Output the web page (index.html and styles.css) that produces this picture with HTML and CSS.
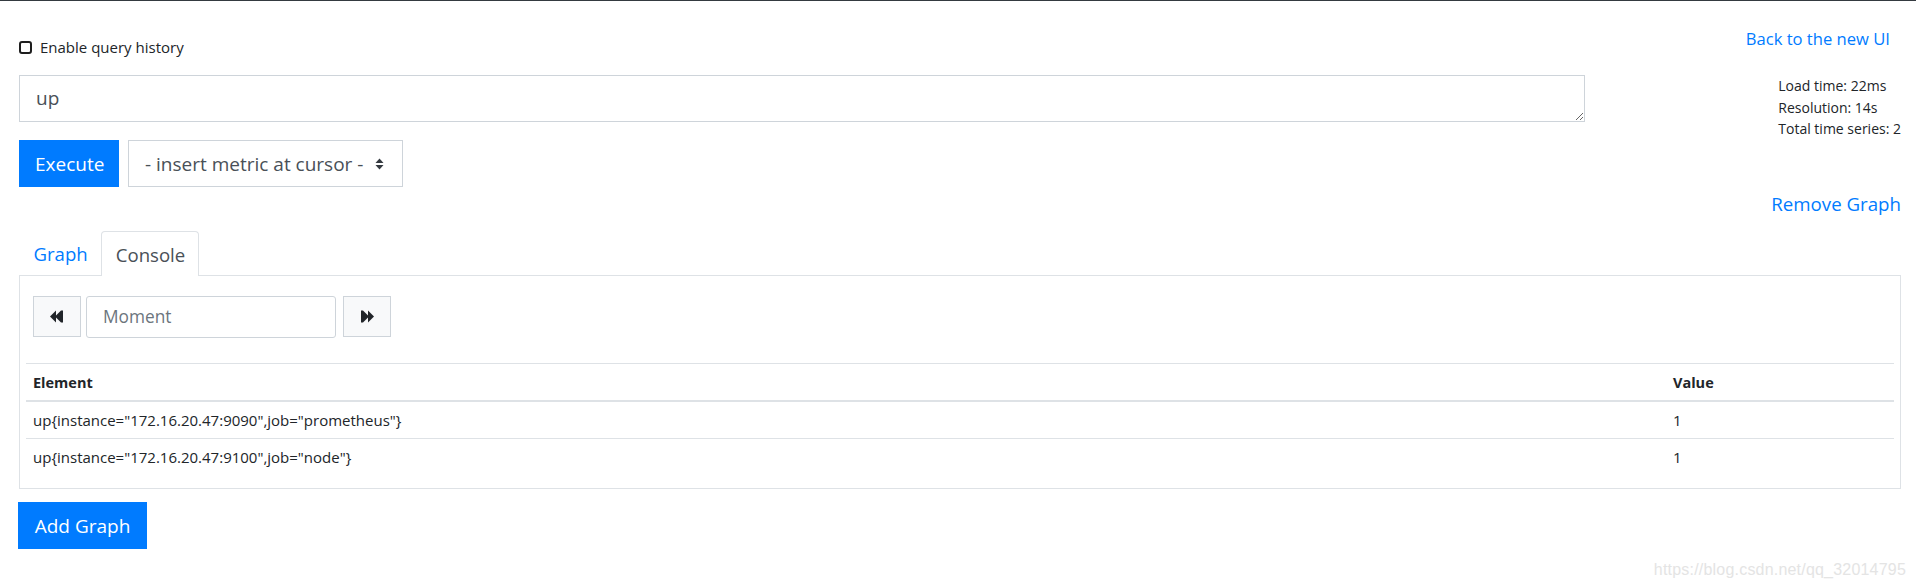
FILE: index.html
```html
<!DOCTYPE html>
<html>
<head>
<meta charset="utf-8">
<link rel="stylesheet" href="styles.css">
</head>
<body>
<div class="topbar"></div>
<div class="page">
  <div class="query-row">
    <div class="query-left">
      <label class="history"><span class="cb"></span><span class="history-text">Enable query history</span></label>
      <textarea class="expr" spellcheck="false">up</textarea>
      <div class="exec-row">
        <button class="btn btn-primary">Execute</button>
        <div class="select">
          <span>- insert metric at cursor -</span>
          <svg class="sel-arrows" width="9" height="12" viewBox="0 0 9 12"><polygon points="0.5,5 4.5,0.5 8.5,5" fill="#343a40"/><polygon points="0.5,7 4.5,11.5 8.5,7" fill="#343a40"/></svg>
        </div>
      </div>
    </div>
    <div class="query-right">
      <a class="link back">Back to the new UI</a>
      <div class="stats">
        <div>Load time: 22ms</div>
        <div>Resolution: 14s</div>
        <div>Total time series: 2</div>
      </div>
    </div>
  </div>
  <div class="remove-row"><a class="link remove">Remove Graph</a></div>
  <div class="tabs">
    <a class="tab link">Graph</a>
    <a class="tab active">Console</a>
  </div>
  <div class="tab-content">
    <div class="moment-row">
      <button class="mbtn"><svg width="14" height="15" viewBox="0 0 14 15"><polygon points="0,7.5 6,1.5 6,13.5" fill="#212529"/><polygon points="5,7.5 11,1.5 11,13.5" fill="#212529"/><rect x="11" y="1.5" width="2" height="12" fill="#212529"/></svg></button>
      <div class="moment">Moment</div>
      <button class="mbtn next"><svg width="14" height="15" viewBox="0 0 14 15"><rect x="1" y="1.5" width="2" height="12" fill="#212529"/><polygon points="3,1.5 9,7.5 3,13.5" fill="#212529"/><polygon points="8,1.5 14,7.5 8,13.5" fill="#212529"/></svg></button>
    </div>
    <table class="data">
      <thead>
        <tr><th class="col-el">Element</th><th>Value</th></tr>
      </thead>
      <tbody>
        <tr><td>up{instance="172.16.20.47:9090",job="prometheus"}</td><td>1</td></tr>
        <tr><td>up{instance="172.16.20.47:9100",job="node"}</td><td>1</td></tr>
      </tbody>
    </table>
  </div>
  <button class="btn btn-primary add">Add Graph</button>
</div>
<div class="watermark">https://blog.csdn.net/qq_32014795</div>
</body>
</html>
```
FILE: styles.css
```css
html, body {
  margin: 0;
  padding: 0;
  background: #fff;
}
body {
  font-family: "Open Sans", "Noto Sans", sans-serif;
  color: #212529;
  width: 1916px;
  height: 586px;
  overflow: hidden;
  position: relative;
}
.topbar {
  height: 1px;
  background: #343a40;
}
.page {
  padding: 0 15px 0 19px;
}
.query-row {
  display: flex;
  justify-content: space-between;
}
.query-left {
  width: 1566px;
  display: flex;
  flex-direction: column;
}
.history {
  display: flex;
  align-items: center;
  margin-top: 39px;
  height: 15px;
  font-size: 15px;
}
.cb {
  width: 9px;
  height: 9px;
  border: 2px solid #1e1e1e;
  border-radius: 3px;
  margin-right: 8px;
  background: #fff;
}
.history-text {
  line-height: 15px;
}
.expr {
  margin: 20px 0 0 0;
  box-sizing: border-box;
  width: 1566px;
  height: 47px;
  border: 1px solid #ced4da;
  border-radius: 0;
  padding: 9px 16px;
  font-family: "Open Sans", sans-serif;
  font-size: 19px;
  line-height: 27px;
  color: #495057;
  resize: vertical;
  outline: none;
  overflow: hidden;
  display: block;
}
.exec-row {
  display: flex;
  margin-top: 18px;
  gap: 9px;
}
.btn {
  font-family: "Open Sans", sans-serif;
  border: none;
  border-radius: 0;
  height: 47px;
  font-size: 19px;
  padding: 0 16px;
  cursor: pointer;
}
.btn-primary {
  background: #007bff;
  color: #fff;
}
.exec-row .btn {
  width: 100px;
}
.select {
  box-sizing: border-box;
  width: 275px;
  height: 47px;
  border: 1px solid #ced4da;
  display: flex;
  align-items: center;
  justify-content: space-between;
  padding: 0 18px 0 16px;
  font-size: 19px;
  color: #495057;
}
.query-right {
  display: flex;
  flex-direction: column;
  align-items: flex-end;
}
.link {
  color: #007bff;
  text-decoration: none;
}
.back {
  margin-top: 25px;
  margin-right: 11px;
  font-size: 16.6px;
  line-height: 26px;
}
.stats {
  margin-top: 23px;
  font-size: 14px;
  line-height: 21.5px;
}
.remove-row {
  display: flex;
  justify-content: flex-end;
  margin-top: 3px;
}
.remove {
  font-size: 18.7px;
  line-height: 28px;
}
.tabs {
  display: flex;
  margin-top: 13px;
  height: 44px;
  position: relative;
  z-index: 1;
}
.tab {
  box-sizing: border-box;
  height: 44px;
  padding: 0 12.5px 0 13.5px;
  display: flex;
  align-items: center;
  font-size: 18.6px;
  border: 1px solid transparent;
  border-bottom: none;
  border-radius: 4px 4px 0 0;
}
.tab.active {
  border-color: #dee2e6;
  background: #fff;
  color: #495057;
  height: 45px;
}
.tab-content {
  box-sizing: border-box;
  width: 1882px;
  height: 214px;
  border: 1px solid #dee2e6;
  padding: 20px 6px 0 6px;
}
.moment-row {
  display: flex;
  align-items: center;
  gap: 5px;
  padding-left: 7px;
  height: 41px;
}
.mbtn {
  box-sizing: border-box;
  width: 48px;
  height: 41px;
  background: #f8f9fa;
  border: 1px solid #ced4da;
  border-radius: 0;
  display: flex;
  align-items: center;
  justify-content: center;
  padding: 0;
}
.mbtn.next {
  margin-left: 2px;
}
.moment {
  box-sizing: border-box;
  width: 250px;
  height: 42px;
  border: 1px solid #ced4da;
  border-radius: 3px;
  display: flex;
  align-items: center;
  padding-left: 16px;
  font-size: 17.3px;
  color: #6c757d;
}
.data {
  width: 1868px;
  margin-top: 26px;
  border-collapse: collapse;
  font-size: 15px;
}
.data th, .data td {
  text-align: left;
  padding: 0 7px;
  border-top: 1px solid #dee2e6;
}
.data th {
  height: 36px;
  font-size: 14.5px;
  font-weight: 700;
  border-bottom: 2px solid #dee2e6;
}
.data td {
  height: 36px;
}
.col-el {
  width: 1626px;
}
.add {
  display: block;
  margin-top: 13px;
  margin-left: -1px;
  width: 129px;
  padding: 0;
}
.watermark {
  position: absolute;
  right: 10px;
  top: 561px;
  font-family: "Liberation Sans", Arial, sans-serif;
  font-size: 16px;
  color: #e4e4e4;
  letter-spacing: 0.2px;
}
```
